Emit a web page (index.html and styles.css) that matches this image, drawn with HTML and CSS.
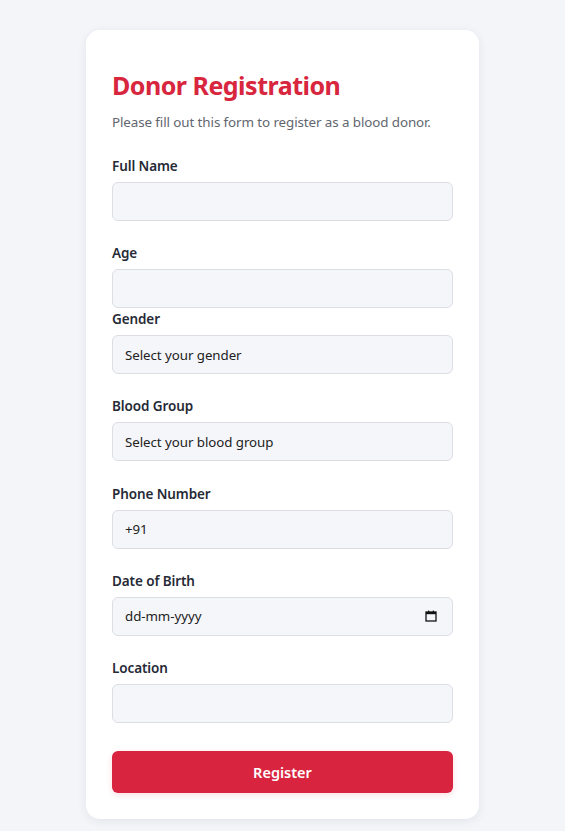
FILE: index.html
```html
<!DOCTYPE html>
<html lang="en">
<head>
<meta charset="utf-8">
<title>Donor Registration</title>
<link rel="stylesheet" href="styles.css">
</head>
<body>
<main class="card">
  <h1 class="title">Donor Registration</h1>
  <p class="subtitle">Please fill out this form to register as a blood donor.</p>
  <form class="form">
    <div class="group">
      <label class="label" for="name">Full Name</label>
      <input class="input" id="name" type="text">
    </div>
    <div class="group group--tight">
      <label class="label" for="age">Age</label>
      <input class="input" id="age" type="text">
    </div>
    <div class="group">
      <label class="label" for="gender">Gender</label>
      <select class="input select" id="gender">
        <option>Select your gender</option>
      </select>
    </div>
    <div class="group">
      <label class="label" for="blood">Blood Group</label>
      <select class="input select" id="blood">
        <option>Select your blood group</option>
      </select>
    </div>
    <div class="group">
      <label class="label" for="phone">Phone Number</label>
      <input class="input" id="phone" type="text" value="+91">
    </div>
    <div class="group">
      <label class="label" for="dob">Date of Birth</label>
      <div class="input date">
        <input class="date-text" id="dob" type="text" placeholder="dd-mm-yyyy">
        <svg class="cal" width="12" height="12" viewBox="0 0 12 12" aria-hidden="true">
          <rect x="1" y="2" width="10" height="9" fill="none" stroke="#111" stroke-width="1.3"/>
          <rect x="1" y="2" width="10" height="2.2" fill="#111"/>
          <rect x="3" y="0.6" width="1.3" height="2" fill="#111"/>
          <rect x="7.7" y="0.6" width="1.3" height="2" fill="#111"/>
        </svg>
      </div>
    </div>
    <div class="group">
      <label class="label" for="loc">Location</label>
      <input class="input" id="loc" type="text">
    </div>
    <button class="button" type="button">Register</button>
  </form>
</main>
</body>
</html>
```
FILE: styles.css
```css
* { box-sizing: border-box; }

body {
  margin: 0;
  background: #f4f5f9;
  font-family: "Noto Sans", "Open Sans", sans-serif;
  color: #2b2f3a;
}

.card {
  width: 393px;
  margin: 30px auto 12px;
  background: #ffffff;
  border-radius: 14px;
  box-shadow: 0 2px 10px rgba(30, 35, 60, 0.08);
  padding: 38px 26px 26px;
}

.title {
  margin: 0;
  font-size: 25px;
  line-height: 34px;
  font-weight: 700;
  letter-spacing: -0.5px;
  color: #d7263d;
}

.subtitle {
  margin: 10px 0 0;
  font-size: 13.4px;
  line-height: 20px;
  letter-spacing: -0.1px;
  color: #62666f;
}

.form {
  margin-top: 24px;
  display: flex;
  flex-direction: column;
}

.group {
  display: flex;
  flex-direction: column;
  margin-bottom: 22.2px;
}

.group--tight { margin-bottom: 1px; }

.label {
  font-size: 13.5px;
  line-height: 20px;
  font-weight: 600;
  letter-spacing: -0.1px;
  color: #262a36;
  margin-bottom: 6px;
}

.input {
  height: 39px;
  width: 100%;
  border: 1px solid #dcdee4;
  border-radius: 6px;
  background: #f5f6fa;
  padding: 0 12px;
  font-family: inherit;
  font-size: 13.3px;
  letter-spacing: -0.05px;
  color: #222;
  outline: none;
}

.select {
  appearance: none;
  -webkit-appearance: none;
}

.date {
  display: flex;
  align-items: center;
  justify-content: space-between;
  padding-right: 15px;
}

.date-text {
  flex: 1;
  border: 0;
  background: transparent;
  font-family: inherit;
  font-size: 13.3px;
  letter-spacing: -0.05px;
  color: #222;
  padding: 0;
  outline: none;
}

.date-text::placeholder { color: #222; }

.cal { display: block; }

.button {
  margin-top: 6px;
  height: 42px;
  width: 100%;
  border: 0;
  border-radius: 6px;
  background: #d9243f;
  color: #ffffff;
  font-family: inherit;
  font-size: 14.5px;
  font-weight: 600;
  box-shadow: 0 2px 6px rgba(217, 36, 63, 0.15);
}
```
